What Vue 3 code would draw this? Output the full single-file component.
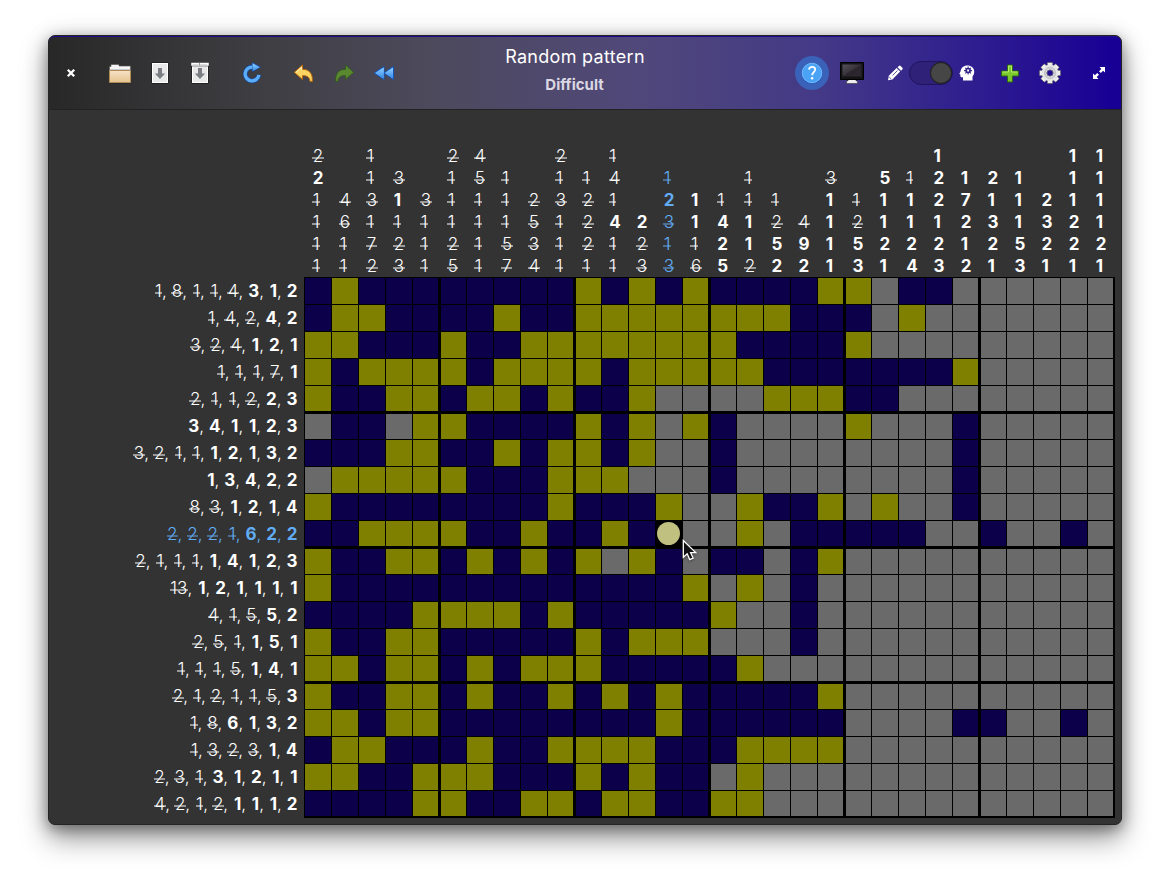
<script setup>
const cells = [
  'BYBBB BBBBB YBYBY BBBBY YGBBG GGGGG',
  'BYYBB BBYBB YYYYY YYYBB BGYGG GGGGG',
  'YYBBB YBBYY YYYYY YBBBB YGGGG GGGGG',
  'YBYYY YBYYY YBYYY YYBBB BBBBY GGGGG',
  'YBBYY BYYBY BBYGG GGYYY BBGGG GGGGG',
  'GBBGY YBBBB YBYGY BGGGG YGGGB GGGGG',
  'BBBYY BBYBY YBYGG BGGGG GGGGB GGGGG',
  'GYYYY YBBBY YYGGG BGGGG GGGGB GGGGG',
  'YBBBB BBBBY BBBYG GYBBY GYGGB GGGGG',
  'BBYYY YBBYB BYBCG GYGBB BBBGG BGGBG',
  'YBBYY BYBYB YGYBG BBGBY GGGGG GGGGG',
  'YBBBB BBBBB BBBBY GYGBG GGGGG GGGGG',
  'BBBBY YYYBY BBBBB YGGBG GGGGG GGGGG',
  'YBBYY BBBBB YBYYY GGGBG GGGGG GGGGG',
  'YYBYY BYBYY YBBBB BYGGG GGGGG GGGGG',
  'YBBYY BYBBY BYBYB BBBBY GGGGG GGGGG',
  'YYBYY BBBBB BBBYB BBBBB GGGGB BGGBG',
  'BYYBB BYBBY YYYBB BYYYY GGGGG GGGGG',
  'YYBBY YYBBB YBYBB GYGGG GGGGG GGGGG',
  'BBBBY YBBYY BYYBB YYGGG GGGGG GGGGG',
].map((r) => r.replace(/ /g, '').split(''))

// A leading "-" marks a clue block that is already completed.
const parse = (s) => s.split(' ').map((t) => ({ n: t.replace('-', ''), done: t[0] === '-' }))

const colClues = [
  '-2 2 -1 -1 -1 -1', '-4 -6 -1 -1', '-1 -1 -3 -1 -7 -2', '-3 1 -1 -2 -3', '-3 -1 -1 -1',
  '-2 -1 -1 -1 -2 -5', '-4 -5 -1 -1 -1 -1', '-1 -1 -1 -5 -7', '-2 -5 -3 -4', '-2 -1 -3 -1 -1 -1',
  '-1 -2 -2 -2 -1', '-1 -4 -1 4 -1 -1', '2 -2 -3', '-1 2 -3 -1 -3', '1 1 -1 -6',
  '-1 4 2 5', '-1 -1 1 1 -2', '-1 -2 5 2', '-4 9 2', '-3 1 1 1 1',
  '-1 -2 5 3', '5 1 1 2 1', '-1 1 1 2 4', '1 2 2 1 2 3', '1 7 2 1 2',
  '2 1 3 2 1', '1 1 1 5 3', '2 3 2 1', '1 1 1 2 2 1', '1 1 1 1 2 1',
].map(parse)

const rowClues = [
  '-1 -8 -1 -1 -4 3 1 2', '-1 -4 -2 4 2', '-3 -2 -4 1 2 1', '-1 -1 -1 -7 1', '-2 -1 -1 -2 2 3',
  '3 4 1 1 2 3', '-3 -2 -1 -1 1 2 1 3 2', '1 3 4 2 2', '-8 -3 1 2 1 4', '-2 -2 -2 -1 6 2 2',
  '-2 -1 -1 -1 1 4 1 2 3', '-13 1 2 1 1 1 1', '-4 -1 -5 5 2', '-2 -5 -1 1 5 1', '-1 -1 -1 -5 1 4 1',
  '-2 -1 -2 -1 -1 -5 3', '-1 -8 6 1 3 2', '-1 -3 -2 -3 1 4', '-2 -3 -1 3 1 2 1 1', '-4 -2 -1 -2 1 1 1 2',
].map(parse)

const activeRow = 9
const activeCol = 13
const teeth = [0, 45, 90, 135, 180, 225, 270, 315]
</script>

<template>
  <div class="desktop">
    <div class="window">
      <header class="bar">
        <svg class="ic" viewBox="0 0 24 24"><path d="M8.800 8.800l6.400 6.400M15.200 8.800l-6.400 6.400" stroke="#fff" stroke-width="2.300" /></svg>
        <div class="group files">
          <svg class="ic" viewBox="0 0 24 24">
            <defs><linearGradient id="fold" x2="0" y2="1"><stop offset="0" stop-color="#f6e2c6" /><stop offset="1" stop-color="#e5c38f" /></linearGradient></defs>
            <path d="M1.500 21V5.500h1.500V3.500h8v1.500h11.500V21z" fill="#f4f4f6" stroke="#55504a" stroke-opacity=".6" />
            <path d="M2 8.500h20" stroke="#c9c9d2" />
            <path d="M1.500 9.500h21V21.500h-21z" fill="url(#fold)" stroke="#b08c55" />
            <path d="M1 22.500h22" stroke="#222" stroke-opacity=".5" />
          </svg>
          <svg class="ic" viewBox="0 0 24 24">
            <path d="M3.500 1.500h17v21h-17z" fill="#e9e9e9" stroke="#222" />
            <path d="M4.500 2.500h15v19h-15z" fill="none" stroke="#fff" />
            <path d="M10 7h4v5.500h3.200L12 18l-5.200-5.500H10z" fill="#7b7e82" />
          </svg>
          <svg class="ic" viewBox="0 0 24 24">
            <path d="M3.500 4.500h17v18h-17z" fill="#e9e9e9" stroke="#222" />
            <path d="M4.500 6v15.500h15V6" fill="none" stroke="#fff" />
            <path d="M3 1.500h18v3.500H3z" fill="#fff" stroke="#333" stroke-width=".5" />
            <path d="M4.500 3.500h6M12 3.500h7" stroke="#ddd" /><path d="M11.500 2v2.500" stroke="#999" />
            <path d="M10 7h4v5.500h3.200L12 18l-5.200-5.500H10z" fill="#7b7e82" />
          </svg>
        </div>
        <svg class="ic reload" viewBox="0 0 24 24">
          <defs><linearGradient id="blue" x2="0" y2="1"><stop offset="0" stop-color="#8fd0ff" /><stop offset="1" stop-color="#3689e6" /></linearGradient></defs>
          <path d="M19 13.700a6.900 6.900 0 1 1-6.500-7.700" fill="none" stroke="#0d52bf" stroke-opacity=".75" stroke-width="4.800" />
          <path d="M12 1l9.300 5.100-9.300 5.200z" fill="#0d52bf" fill-opacity=".75" />
          <path d="M18.900 13.900a6.900 6.900 0 1 1-6.500-7.800" fill="none" stroke="#5cadf7" stroke-width="3.300" />
          <path d="M12.600 2.200l7.200 4-7.200 4.100z" fill="url(#blue)" />
        </svg>
        <div class="group history">
          <svg class="ic" viewBox="0 0 24 24">
            <path d="M2.300 11.300L10.500 4v4.300c7 0 10.500 4.700 9.800 12.200h-2.300c-.3-4.300-2.600-6-7.500-5.800v3.900z" fill="#fcd461" stroke="#b5670f" stroke-linejoin="round" />
            <path d="M4 11.300L9.600 6.200v3" fill="none" stroke="#fff3c4" />
          </svg>
          <svg class="ic" viewBox="0 0 24 24">
            <path d="M21.700 11.300L13.500 4v4.300c-7 0-10.500 4.700-9.800 12.200H6c.3-4.300 2.600-6 7.500-5.800v3.900z" fill="#5a8830" stroke="#35591f" stroke-linejoin="round" />
          </svg>
          <svg class="ic" viewBox="0 0 24 24">
            <path d="M12 5.500v13L2.300 12zM21.500 5.500v13L12 12z" fill="#61b1fa" stroke="#1557b8" stroke-linejoin="round" />
            <path d="M11.800 6.800v10.400L3.500 12zM21 6.800v10.400L13 12z" fill="url(#blue)" />
          </svg>
        </div>

        <div class="titles">
          <div class="title">Random pattern</div>
          <div class="subtitle">Difficult</div>
        </div>

        <div class="group view">
          <span class="help">
            <svg class="ic" viewBox="0 0 24 24">
              <circle cx="12" cy="12.300" r="10.500" fill="#0d52bf" />
              <circle cx="12" cy="12" r="9.800" fill="#4ba3f5" stroke="#8cc8ff" stroke-width=".8" />
              <path d="M9 8.600c.2-1.800 1.400-2.700 3.100-2.700 1.900 0 3.100 1 3.100 2.700 0 2.500-3 2.800-3 5.600" fill="none" stroke="#fff" stroke-width="1.800" />
              <circle cx="12.100" cy="17.300" r="1.200" fill="#fff" />
            </svg>
          </span>
          <svg class="ic" viewBox="0 0 24 24">
            <defs><linearGradient id="scr" x2="1" y2="1"><stop offset="0" stop-color="#57535b" /><stop offset=".5" stop-color="#37323a" /><stop offset=".5" stop-color="#2a252c" /><stop offset="1" stop-color="#2d2830" /></linearGradient></defs>
            <path d="M8 18h8v2h1.500v2.500h-11V20H8z" fill="#eee" stroke="#222" stroke-width=".5" />
            <path d="M.5 1.500h23v17H.5z" fill="#141414" stroke="#000" />
            <path d="M2.500 3.500h19v12h-19z" fill="url(#scr)" />
          </svg>
        </div>
        <div class="group mode">
          <svg class="ic16" viewBox="0 0 16 16"><path d="M1 15.300l.8-4.500L9.600 3l3.600 3.600-7.800 7.900zM10.500 2.200l1.700-1.500q.6-.4 1.100 0l2.300 2.400q.4.500 0 1l-1.500 1.700z" fill="#fff" /><path d="M2.200 12l1.900 1.900M5.500 10.500l5-5" stroke="#3b2d86" stroke-width=".8" /></svg>
          <span class="switch"><span class="knob"></span></span>
          <svg class="ic16" viewBox="0 0 16 16">
            <path d="M4 15.500v-3.300H2.300q-1 0-.9-1V9.500L.3 9 1.600 6.200C1.900 2.700 4.700.4 8.300.4c3.900 0 6.900 2.500 6.900 6.100 0 2.500-.7 3.500-1.700 5v4z" fill="#fff" />
            <circle cx="9.100" cy="5.600" r="2" fill="none" stroke="#32238a" stroke-width="1.500" />
            <path d="M9.100 1.600v8M5.100 5.600h8M6.300 2.800l1.300 1.300M10.600 7.100l1.300 1.300M6.300 8.400l1.300-1.300M10.600 4.100l1.300-1.300" stroke="#32238a" stroke-width="1.100" />
            <circle cx="9.100" cy="5.600" r="1" fill="#fff" />
          </svg>
        </div>
        <div class="group tools">
          <svg class="ic" viewBox="0 0 24 24">
            <path d="M9.500 4h5v6h6v5h-6v6h-5v-6h-6v-5h6z" fill="#7bc92c" stroke="#2f6b12" />
            <path d="M10.500 5h3v6h6M4.500 11h6V5" fill="none" stroke="#b4ec6c" />
          </svg>
          <svg class="ic" viewBox="0 0 24 24">
            <g stroke="#55555d" stroke-width=".7" fill="#eee"><rect v-for="t in teeth" :key="t" x="9.300" y="1.400" width="5.400" height="5.500" rx=".8" :transform="`rotate(${t} 12 12)`" /></g>
            <circle cx="12" cy="12" r="5.800" fill="none" stroke="#e6e6e6" stroke-width="5" />
            <circle cx="12" cy="12" r="5.300" fill="none" stroke="#c4c4c8" stroke-width="1.700" />
            <circle cx="12" cy="12" r="3.100" fill="none" stroke="#777780" stroke-width=".8" />
          </svg>
        </div>
        <svg class="ic" viewBox="0 0 24 24"><path d="M12.500 6H18v5.500l-1.900-1.800-2.300 2.300-1.800-1.800 2.300-2.300zM6 12.500l1.900 1.800 2.300-2.300 1.800 1.800-2.300 2.300 1.800 1.900H6z" fill="#fff" /></svg>
      </header>

      <main class="board">
        <div class="corner"></div>
        <div class="cols">
          <div v-for="(col, c) in colClues" :key="c" class="col" :class="{ active: c === activeCol }">
            <div class="stack">
              <div v-for="(k, i) in col" :key="i" class="num" :class="{ done: k.done }"><span>{{ k.n }}</span></div>
            </div>
          </div>
        </div>
        <div class="rows">
          <div v-for="(row, r) in rowClues" :key="r" class="row" :class="{ active: r === activeRow }">
            <template v-for="(k, i) in row" :key="i"><span class="num" :class="{ done: k.done, one: k.n[0] === '1' }"><span>{{ k.n }}</span></span><span v-if="i < row.length - 1" class="sep">, </span></template>
          </div>
        </div>
        <div class="grid">
          <template v-for="(row, r) in cells" :key="r">
            <div
              v-for="(v, c) in row"
              :key="c"
              class="cell"
              :class="[v, { l: c % 5 === 0 && c, r: c % 5 === 4, t: r % 5 === 0 && r, b: r % 5 === 4 }]"
            >
              <i v-if="v === 'C'" class="dot"></i>
              <svg v-if="v === 'C'" class="pointer" viewBox="0 0 16 24">
                <path d="M1.300 1.500v16.800l3.900-3.500 2.500 5.800 3.400-1.500-2.500-5.500h5.100z" fill="#111" stroke="#fff" stroke-width="1.300" />
              </svg>
            </div>
          </template>
        </div>
      </main>
    </div>
  </div>
</template>

<style>
body {
  background: #fff;
}
</style>

<style scoped>
.desktop {
  box-sizing: border-box;
  width: 1170px;
  height: 886px;
  padding: 35px 48px 61px;
  overflow: hidden;
  background: #fff;
  font-family: Inter, 'Liberation Sans', sans-serif;
  color: #fff;
}
.window {
  box-sizing: border-box;
  height: 790px;
  border: 1px solid #242424;
  border-radius: 7px;
  background: #333;
  box-shadow: 0 14px 28px rgba(0, 0, 0, 0.38), 0 4px 14px rgba(0, 0, 0, 0.34), 0 0 26px rgba(0, 0, 0, 0.1);
}
.bar {
  box-sizing: border-box;
  height: 74px;
  padding: 0 10px;
  display: flex;
  align-items: center;
  border-top: 1px solid #1d0a8c;
  border-bottom: 1px solid #222;
  border-radius: 6px 6px 0 0;
  background: linear-gradient(90deg, #282828 0%, #3f3e42 20%, #4d4a5d 36%, #50487a 55%, #433987 72%, #2c1a90 88%, #190095 99%);
}
.ic {
  width: 24px;
  height: 24px;
  flex: none;
}
.ic16 {
  width: 16px;
  height: 16px;
  flex: none;
}
.group {
  display: flex;
  align-items: center;
  gap: 16px;
}
.files {
  margin-left: 25px;
}
.reload {
  margin: 0 28px;
}
.titles {
  width: 358px;
  text-align: center;
}
.title {
  margin-top: 4px;
  font-size: 18px;
  line-height: 24px;
  letter-spacing: 0.3px;
}
.subtitle {
  margin: 5px 0 9px;
  padding-right: 1px;
  font-size: 15px;
  line-height: 22px;
  font-weight: 700;
  color: #dad8e2;
}
.help {
  width: 34px;
  height: 34px;
  margin: 0 -5px;
  display: flex;
  align-items: center;
  justify-content: center;
  border-radius: 50%;
  background: #3a62b8;
}
.view {
  margin-left: 46px;
}
.mode {
  margin-left: 23px;
  gap: 6px;
}
.switch {
  box-sizing: border-box;
  width: 44px;
  height: 24px;
  padding: 1px;
  display: flex;
  justify-content: flex-end;
  border: 1px solid #21145c;
  border-radius: 12px;
  background: #2f2178;
}
.knob {
  width: 20px;
  height: 20px;
  border-radius: 50%;
  background: #464646;
  box-shadow: 0 0 0 1px #222;
}
.tools {
  margin: 0 25px 0 23px;
}
.board {
  display: grid;
  grid-template-columns: 255px 811px;
  grid-template-rows: 167px 541px;
}
.cols {
  display: grid;
  grid-template-columns: repeat(30, 27px);
  padding-left: 0.5px;
}
.col {
  display: flex;
  justify-content: center;
  align-items: flex-end;
}
.num {
  font-weight: 700;
}
.stack .num {
  line-height: 22px;
  font-size: 17px;
}
.num.done {
  position: relative;
  font-weight: 300;
}
.num.done span {
  position: relative;
  display: inline-block;
}
.num.done span::after {
  content: '';
  position: absolute;
  left: -0.5px;
  right: -0.5px;
  top: 11.5px;
  height: 2px;
  background: currentColor;
  opacity: 0.5;
}
.row .num.done span::after {
  top: 14px;
}
.rows {
  padding: 1px 6.5px 0 0;
}
.row {
  height: 27px;
  line-height: 27px;
  font-size: 17px;
  font-weight: 300;
  text-align: right;
  white-space: pre;
}
.sep {
  letter-spacing: 0.08px;
}
.row .one {
  margin-left: 0.8px;
}
.row .one.done {
  margin-left: 1px;
  margin-right: 0.4px;
}
.active {
  color: #62acf3;
}
.grid {
  box-sizing: border-box;
  display: grid;
  grid-template-columns: repeat(30, 27px);
  grid-template-rows: repeat(20, 27px);
  border-right: 1px solid #000;
  border-bottom: 1px solid #000;
}
.cell {
  position: relative;
  border: 0 solid #000;
  border-top-width: 1px;
  border-left-width: 1px;
}
.cell.l {
  border-left-width: 2px;
}
.cell.r {
  border-right-width: 1px;
}
.cell.t {
  border-top-width: 2px;
}
.cell.b {
  border-bottom-width: 1px;
}
.B {
  background: #0b0049;
}
.Y {
  background: #808000;
}
.G {
  background: #6a6a6a;
}
.C {
  background: #000;
}
.dot {
  position: absolute;
  left: 1px;
  top: 1px;
  width: 23px;
  height: 23px;
  border-radius: 50%;
  background: #c0c080;
}
.pointer {
  position: absolute;
  z-index: 2;
  left: 26px;
  top: 18px;
  width: 16px;
  height: 24px;
  filter: drop-shadow(0 1px 1px rgba(0, 0, 0, 0.4));
}
</style>
